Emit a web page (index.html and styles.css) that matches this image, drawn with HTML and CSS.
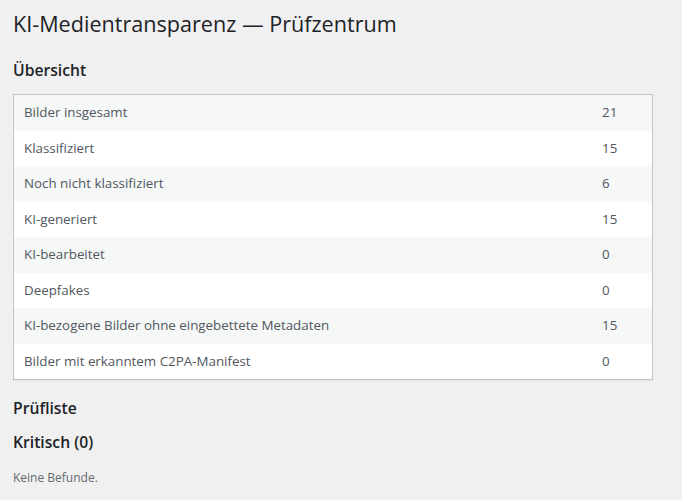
FILE: index.html
```html
<!DOCTYPE html>
<html lang="de">
	<head>
		<title>KI-Medientransparenz — Prüfzentrum</title>
		<meta charset="utf-8">
		<meta name="viewport" content="width=device-width,initial-scale=1.0">
		<link rel="stylesheet" href="styles.css">
	</head>
	<body>
		<div class="wrap">
			<h1>KI-Medientransparenz — Prüfzentrum</h1>

			<h2>Übersicht</h2>
			<table class="widefat striped">
				<tbody>
					<tr><td>Bilder insgesamt</td><td class="num">21</td></tr>
					<tr><td>Klassifiziert</td><td class="num">15</td></tr>
					<tr><td>Noch nicht klassifiziert</td><td class="num">6</td></tr>
					<tr><td>KI-generiert</td><td class="num">15</td></tr>
					<tr><td>KI-bearbeitet</td><td class="num">0</td></tr>
					<tr><td>Deepfakes</td><td class="num">0</td></tr>
					<tr><td>KI-bezogene Bilder ohne eingebettete Metadaten</td><td class="num">15</td></tr>
					<tr><td>Bilder mit erkanntem C2PA-Manifest</td><td class="num">0</td></tr>
				</tbody>
			</table>

			<h2>Prüfliste</h2>
			<h3>Kritisch (0)</h3>
			<p class="description">Keine Befunde.</p>
		</div>
	</body>
</html>
```

FILE: styles.css
```css
html,body{margin:0;padding:0;background:#f0f0f1;}
body{font-family:"Open Sans","Noto Sans",sans-serif;font-size:13px;line-height:1.4em;color:#3c434a;}
.wrap{padding:0 13px;}

h1{font-size:21.6px;font-weight:400;line-height:28px;margin:0;padding:10px 0 4px;color:#1d2327;}
h2,h3{font-size:15.7px;font-weight:600;color:#1d2327;margin:14px 0;line-height:20px;}
h2{margin-top:18px;}

.widefat{width:640px;border-spacing:0;border:1px solid #c3c4c7;background:#fff;box-shadow:0 1px 1px rgba(0,0,0,.04);}
.widefat td{padding:8px 10px;line-height:19.5px;color:#50575e;font-size:13.35px;vertical-align:top;}
.widefat td.num{width:40px;}
.striped tbody tr:nth-child(odd){background:#f6f7f7;}

.description{font-size:12px;line-height:17px;color:#646970;margin:17px 0 0;}
```
